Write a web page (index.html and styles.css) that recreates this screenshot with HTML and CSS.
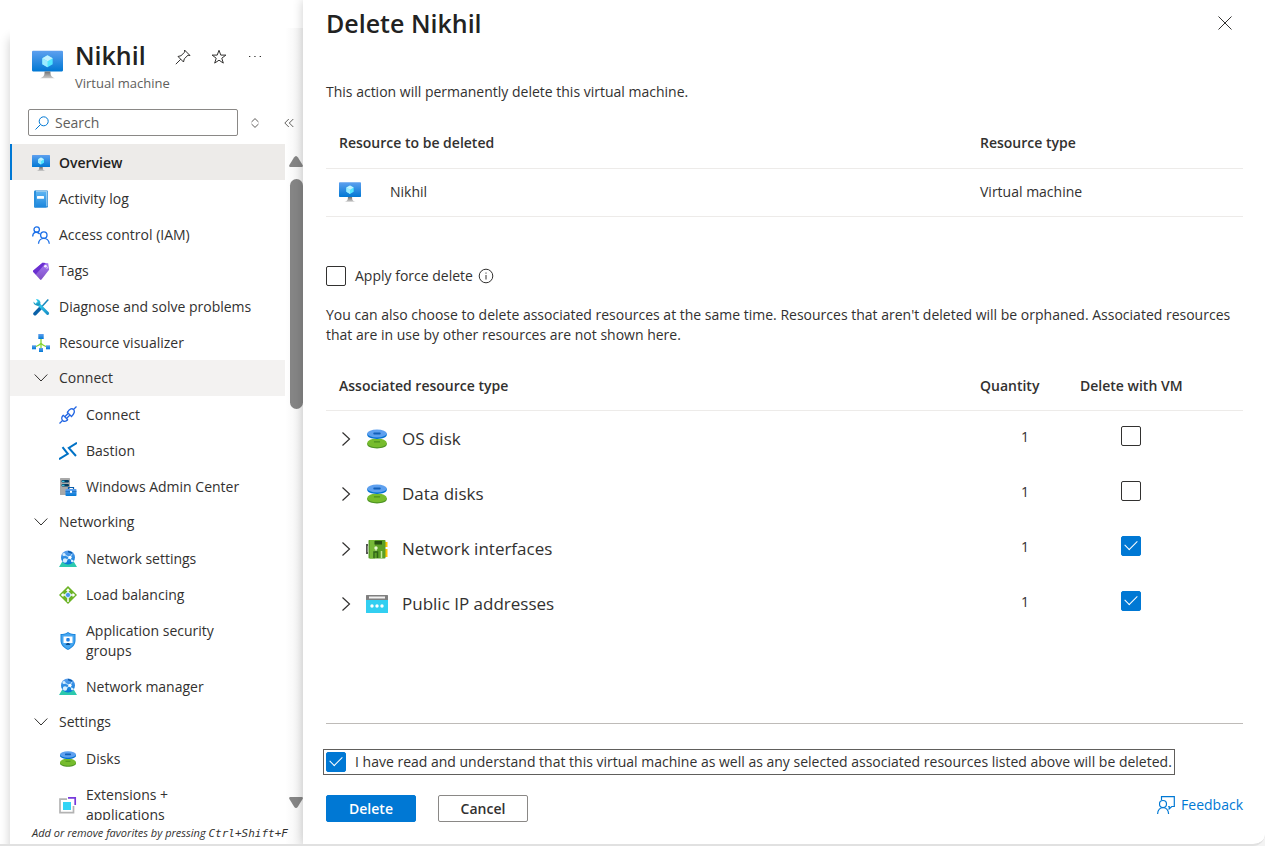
FILE: index.html
```html
<!doctype html>
<html lang="en">
  <head>
    <meta charset="UTF-8" />
    <meta name="viewport" content="width=device-width, initial-scale=1.0" />
    <title>Delete Nikhil</title>
    <link rel="stylesheet" href="styles.css">
  </head>
  <body>
    <!-- Shared icons -->
    <svg class="sprite" aria-hidden="true">
      <defs>
        <linearGradient id="vmScreen" x1="0" y1="0" x2="0" y2="1">
          <stop offset="0" stop-color="#5ea0ef" />
          <stop offset="1" stop-color="#0078d4" />
        </linearGradient>
        <linearGradient id="logFill" x1="0" y1="0" x2="0" y2="1">
          <stop offset="0" stop-color="#5cb4f2" />
          <stop offset="1" stop-color="#1a85dc" />
        </linearGradient>
        <linearGradient id="vmStand" x1="0" y1="0" x2="0" y2="1">
          <stop offset="0" stop-color="#707070" />
          <stop offset="1" stop-color="#cccccc" />
        </linearGradient>
        <linearGradient id="tagFill" x1="0" y1="0" x2="0" y2="1">
          <stop offset="0" stop-color="#a67af4" />
          <stop offset="1" stop-color="#7f4fc4" />
        </linearGradient>
        <linearGradient id="toolFill" x1="0" y1="0" x2="0" y2="1">
          <stop offset="0" stop-color="#32d4f5" />
          <stop offset="1" stop-color="#198ab3" />
        </linearGradient>
        <linearGradient id="wrenchFill" x1="1" y1="1" x2="0" y2="0">
          <stop offset="0" stop-color="#1b93c8" />
          <stop offset="1" stop-color="#32d4f5" />
        </linearGradient>
      </defs>
      <symbol id="vm" viewBox="0 0 18 18">
        <rect y="1" width="18" height="12" rx="0.6" fill="url(#vmScreen)" />
        <path d="M9 3.6l3 1.7v3.5l-3 1.8-3-1.8V5.300z" fill="#50e6ff" />
        <path d="M9 3.6l3 1.700-3 1.800-3-1.800z" fill="#c3f1ff" />
        <path d="M6 5.300l3 1.800v3.500L6 8.800z" fill="#9cebff" />
        <path d="M7.300 13h3.400c0 2.600.6 3.200 2.800 4H4.500c2.200-.8 2.800-1.400 2.800-4z" fill="url(#vmStand)" />
      </symbol>
      <symbol id="log" viewBox="0 0 18 18">
        <path d="M3.500.5H15a1 1 0 011 1v15a1 1 0 01-1 1H3.500z" fill="#2585d0" />
        <rect x="3.500" y="1.300" width="11.800" height="15" fill="#d9effc" />
        <rect x="2" y="1.800" width="12.500" height="15.700" rx="0.800" fill="url(#logFill)" />
        <path d="M2 1.600a1.100 1.100 0 011.100-1.100H4v17H3a1 1 0 01-1-1z" fill="#2a8fdc" />
        <rect x="5" y="6" width="7" height="2.800" rx="0.500" fill="#fff" />
      </symbol>
      <symbol id="iam" viewBox="0 0 18 18">
        <g fill="none" stroke="#1a6fe8" stroke-width="1.300">
          <circle cx="4.700" cy="3.500" r="2.700" />
          <path d="M.7 10.500c0-5 5-5.300 7-2.300" />
          <circle cx="11.800" cy="9" r="3.200" />
          <path d="M6.500 17.800c.3-7.300 10.300-7.300 10.800 0" />
        </g>
      </symbol>
      <symbol id="tag" viewBox="0 0 18 18">
        <path d="M10.500.8l5.700.5.9 6.400-7.600 9.800a1 1 0 01-1.500.1L1.300 10a1 1 0 010-1.400z" fill="url(#tagFill)" />
        <path d="M10.500.8l3.200.3L3.800 12.500 1.300 10a1 1 0 010-1.400z" fill="#6a2fd0" />
        <circle cx="13.500" cy="4.300" r="1.300" fill="#fff" />
        <path d="M13.500 4.300c2-.5 2.500 1 1.300 2.500" fill="none" stroke="#e3d3fb" />
      </symbol>
      <symbol id="tools" viewBox="0 0 18 18">
        <path d="M16.300 1.500L9.500 9" stroke="#1787bd" stroke-width="1.500" />
        <path d="M8.500 10L3 15.700" stroke="#0a61a8" stroke-width="3.500" stroke-linecap="round" />
        <path d="M5.600 5.400l10 10" stroke="url(#wrenchFill)" stroke-width="3" stroke-linecap="round" />
        <path d="M4 1a4 4 0 014.200 5.400 4 4 0 01-6.900-2.800l2.400 2.100L6 4.500z" fill="url(#toolFill)" />
      </symbol>
      <symbol id="visualizer" viewBox="0 0 18 18">
        <path d="M9 4v10M2 13c4-1 6-2 7-4 1 2 3 3 7 4" fill="none" stroke="#86d633" stroke-width="1.300" />
        <rect x="6.300" width="5.400" height="5" fill="url(#vmScreen)" />
        <rect y="11.300" width="4" height="4" fill="url(#vmScreen)" />
        <rect x="14" y="11.300" width="4" height="4" fill="url(#vmScreen)" />
        <rect x="7" y="14" width="4" height="4" fill="url(#vmScreen)" />
      </symbol>
      <symbol id="plug" viewBox="0 0 18 18">
        <g fill="none" stroke="#2266e3" stroke-width="1.300">
          <path d="M.5 17.500l3-3M17.500.5l-3 3M4 9l5 5M8 6l5 5" />
          <path d="M4.300 9.300c-2 2-2 3.700-.6 5.100 1.400 1.300 3.200 1.300 5-.6M8.300 6.300c2.700-3.700 4.800-4.200 6.200-2.900 1.400 1.500.9 4.200-2 7M5.800 10.800l3.500-3.500M7.500 12.500L11 9" />
        </g>
      </symbol>
      <symbol id="bastion" viewBox="0 0 18 18">
        <g fill="none" stroke="#0072c6" stroke-width="2">
          <path d="M0 17.200l8.800-5.400L3.500 5.200M18 .8L9.800 6l7.200 8" />
        </g>
      </symbol>
      <symbol id="admin" viewBox="0 0 18 18">
        <rect x="1" width="10" height="17" rx="0.600" fill="#a9a9a9" />
        <rect x="2.500" y="2" width="7.500" height="2.600" rx="1" fill="#003c61" />
        <rect x="2.500" y="6" width="7.500" height="2.600" rx="1" fill="#003c61" />
        <path d="M3 3.300h2.500M3 7.300h2.500" stroke="#50e6ff" />
        <path d="M9.500 11V9.500h5V11" fill="none" stroke="#0b5ca8" stroke-width="1.200" />
        <rect x="6.500" y="11" width="11" height="7" rx="0.800" fill="url(#vmScreen)" />
        <path d="M6.500 13.500h11" stroke="#0b5ca8" stroke-width="0.500" />
        <rect x="11" y="12.800" width="2" height="2" fill="#fff" />
      </symbol>
      <symbol id="globe" viewBox="0 0 18 18">
        <path d="M3 12h12l3 5H0z" fill="#2cc9ae" />
        <circle cx="9" cy="7.500" r="7" fill="url(#vmScreen)" />
        <path d="M5 4.500l6 3 2 4M11 7.500l-5 3.500M11 7.500l2-3.500" stroke="#b9e3ff" fill="none" />
        <circle cx="5" cy="4.500" r="1.500" fill="#d6efff" />
        <circle cx="6" cy="10.500" r="2.200" fill="#d6efff" />
        <circle cx="11" cy="7.300" r="1.600" fill="#fff" />
        <circle cx="13.300" cy="11" r="1.300" fill="#d6efff" />
        <path d="M9 1.500l4 1.500" stroke="#0b5ca8" stroke-width="1.500" />
      </symbol>
      <symbol id="balancer" viewBox="0 0 18 18">
        <path d="M9 0l9 9-9 9-9-9z" fill="#6bb324" />
        <path d="M9 2.200l2.300 2.600H6.700zM1.800 9l2.600-2.300v4.600zM16.200 9l-2.600-2.300v4.600z" fill="#fff" />
        <path d="M9 4v3M4 9h3M14 9h-3M9 11v5" stroke="#fff" stroke-width="1.500" />
        <circle cx="9" cy="9" r="2.600" fill="#4b95ed" stroke="#d7efff" />
      </symbol>
      <symbol id="shield" viewBox="0 0 18 18">
        <path d="M9 0c3 2 5 2 7.500 2v6.500c0 4.500-3.500 7.500-7.500 9.500-4-2-7.500-5-7.500-9.500V2C4 2 6 2 9 0z" fill="#1984dc" />
        <path d="M9 1c2.500 1.600 4.300 1.800 6.500 1.900v5.600c0 4-3 6.600-6.500 8.400-3.500-1.800-6.500-4.400-6.500-8.400V2.900C4.700 2.800 6.500 2.600 9 1z" fill="#46a6f0" />
        <rect x="4.500" y="4.500" width="9" height="6.500" fill="#fff" />
        <rect x="7.300" y="6" width="3.400" height="3.400" rx="1" fill="#2180e3" />
        <path d="M8 11h2l1.500 2h-5z" fill="#0b4d8e" />
      </symbol>
      <symbol id="disks" viewBox="0 0 18 18">
        <path d="M1 12.300v1.200c0 1.800 3.600 3.200 8 3.200s8-1.400 8-3.200v-1.200z" fill="#4e9423" />
        <ellipse cx="9" cy="12.200" rx="8" ry="3.600" fill="#76bc2d" />
        <path d="M6.500 11.300h5" stroke="#549b20" stroke-width="1.300" />
        <path d="M1 4.500v1.300C1 7.600 4.600 9 9 9s8-1.400 8-3.200V4.500z" fill="#0070d1" />
        <ellipse cx="9" cy="4.500" rx="8" ry="3.300" fill="#5ea0ef" />
        <rect x="6" y="3.600" width="6" height="1.700" rx="0.600" fill="#135fb8" />
      </symbol>
      <symbol id="extensions" viewBox="0 0 18 18">
        <path d="M8 3.200H1v13.500h13.500V10" fill="none" stroke="#b3b3b3" stroke-width="1.700" />
        <rect x="4" y="6" width="8" height="8" fill="#32d4f5" />
        <path d="M9 1.800h7.200V9" fill="none" stroke="#773adc" stroke-width="1.700" />
      </symbol>
      <symbol id="nic" viewBox="0 0 22 20">
        <path d="M2 6H.8v8H2" fill="none" stroke="#555" stroke-width="1.800" />
        <rect x="19" y="3" width="2.500" height="5" fill="#ffc400" />
        <rect x="19" y="10" width="2.500" height="8" fill="#ffc400" />
        <rect x="2.500" y="1" width="17" height="18.500" rx="0.800" fill="#5b9f26" />
        <rect x="4" y="1" width="5" height="18.500" fill="#76b837" />
        <rect x="8.500" y="2" width="7.500" height="3.500" fill="#254f12" />
        <path d="M8 19v-6h3.500v6" fill="none" stroke="#2f6417" stroke-width="1.500" />
        <path d="M15.500 19v-7" stroke="#c5eb96" stroke-width="1.500" />
        <path d="M10 9v3" stroke="#d9f4ba" />
        <circle cx="10" cy="9" r="1.700" fill="#e6f8d0" />
      </symbol>
      <symbol id="ip" viewBox="0 0 22 18">
        <rect y="4" width="22" height="14" rx="0.600" fill="#32cff1" />
        <path d="M.6 0h20.800a.6.6 0 01.6.6V5H0V.6A.6.600 0 01.6 0z" fill="#808080" />
        <rect x="3" y="1.500" width="16" height="2" fill="#f2f2f2" />
        <circle cx="6" cy="11" r="1.700" fill="#fff" />
        <circle cx="11" cy="11" r="1.700" fill="#fff" />
        <circle cx="16" cy="11" r="1.700" fill="#fff" />
      </symbol>
      <symbol id="down" viewBox="0 0 14 14">
        <path d="M.7 3.500L7 10l6.300-6.500" fill="none" stroke="#323130" />
      </symbol>
      <symbol id="right" viewBox="0 0 14 14">
        <path d="M3.500.5L10.500 7l-7 6.500" fill="none" stroke="#323130" stroke-width="1.200" />
      </symbol>
    </svg>

    <div class="portal">
      <aside class="sidebar">
        <header class="resource">
          <svg class="resource-icon"><use href="#vm" /></svg>
          <div class="resource-name">
            <h2>Nikhil</h2>
            <p>Virtual machine</p>
          </div>
          <div class="resource-actions">
            <button aria-label="Pin">
              <svg viewBox="0 0 16 16"><path d="M.8 15.200l5-5M3 7.500l5.500 5.500.8-3.200L13 6.200l2 .3L9.500 1l.3 2L6 6.700z" /></svg>
            </button>
            <button aria-label="Favorite">
              <svg viewBox="0 0 16 16"><path d="M8 1.300l1.800 4.800h5.100l-4.100 3.100 1.500 4.900L8 11.200l-4.300 2.900 1.500-4.900-4.100-3.100h5.100z" /></svg>
            </button>
            <button aria-label="More">
              <svg class="dots" viewBox="0 0 16 16"><path d="M2 7.500h1.300M7.300 7.500h1.300M12.700 7.500H14" /></svg>
            </button>
          </div>
        </header>

        <div class="search-row">
          <label class="search">
            <svg viewBox="0 0 14 14"><circle cx="8.700" cy="5.300" r="4.500" /><path d="M5.500 8.500L.5 13.500" /></svg>
            <input type="text" placeholder="Search" aria-label="Search" />
          </label>
          <button aria-label="Expand all">
            <svg viewBox="0 0 10 10"><path d="M1.500 4L5 .6 8.500 4M1.500 6L5 9.400 8.500 6" /></svg>
          </button>
          <button aria-label="Collapse menu">
            <svg viewBox="0 0 10 10"><path d="M4.800 1L.8 5l4 4M9.300 1l-4 4 4 4" /></svg>
          </button>
        </div>

        <div class="menu-wrap">
          <nav class="menu">
            <a class="item selected" href="#"><svg><use href="#vm" /></svg><span>Overview</span></a>
            <a class="item" href="#"><svg><use href="#log" /></svg><span>Activity log</span></a>
            <a class="item" href="#"><svg><use href="#iam" /></svg><span>Access control (IAM)</span></a>
            <a class="item" href="#"><svg><use href="#tag" /></svg><span>Tags</span></a>
            <a class="item" href="#"><svg><use href="#tools" /></svg><span>Diagnose and solve problems</span></a>
            <a class="item" href="#"><svg><use href="#visualizer" /></svg><span>Resource visualizer</span></a>
            <button class="item group hovered"><svg><use href="#down" /></svg><span>Connect</span></button>
            <a class="item sub" href="#"><svg><use href="#plug" /></svg><span>Connect</span></a>
            <a class="item sub" href="#"><svg><use href="#bastion" /></svg><span>Bastion</span></a>
            <a class="item sub" href="#"><svg><use href="#admin" /></svg><span>Windows Admin Center</span></a>
            <button class="item group"><svg><use href="#down" /></svg><span>Networking</span></button>
            <a class="item sub" href="#"><svg><use href="#globe" /></svg><span>Network settings</span></a>
            <a class="item sub" href="#"><svg><use href="#balancer" /></svg><span>Load balancing</span></a>
            <a class="item sub" href="#"><svg><use href="#shield" /></svg><span>Application security groups</span></a>
            <a class="item sub" href="#"><svg><use href="#globe" /></svg><span>Network manager</span></a>
            <button class="item group"><svg><use href="#down" /></svg><span>Settings</span></button>
            <a class="item sub" href="#"><svg><use href="#disks" /></svg><span>Disks</span></a>
            <a class="item sub" href="#"><svg><use href="#extensions" /></svg><span>Extensions +<br />applications</span></a>
          </nav>
          <div class="scrollbar" aria-hidden="true">
            <svg viewBox="0 0 14 11"><path d="M7 0q1 0 2 1.500l4.600 7.500q.9 2-1 2H1.400q-1.900 0-1-2L5 1.500Q6 0 7 0z" /></svg>
            <div class="track"><div class="thumb"></div></div>
            <svg viewBox="0 0 14 11"><path d="M7 11q1 0 2-1.500L13.600 2q.9-2-1-2H1.400q-1.900 0-1 2L5 9.500Q6 11 7 11z" /></svg>
          </div>
        </div>

        <p class="hint">Add or remove favorites by pressing <kbd>Ctrl+Shift+F</kbd></p>
      </aside>

      <main class="panel">
        <header class="panel-header">
          <h1>Delete Nikhil</h1>
          <button class="close" aria-label="Close">
            <svg viewBox="0 0 14 14"><path d="M.5.5l13 13M13.500.5l-13 13" /></svg>
          </button>
        </header>

        <div class="content">
          <p class="intro">This action will permanently delete this virtual machine.</p>

          <table class="resources">
            <colgroup>
              <col class="col-icon" />
              <col />
              <col class="col-type" />
            </colgroup>
            <thead>
              <tr>
                <th colspan="2">Resource to be deleted</th>
                <th>Resource type</th>
              </tr>
            </thead>
            <tbody>
              <tr>
                <td><svg><use href="#vm" /></svg></td>
                <td class="name">Nikhil</td>
                <td>Virtual machine</td>
              </tr>
            </tbody>
          </table>

          <div class="force">
            <input type="checkbox" id="force" />
            <label for="force">Apply force delete</label>
            <svg viewBox="0 0 16 16"><circle cx="8" cy="8" r="6.800" /><path d="M8 7v4.500M8 4.500v1.200" /></svg>
          </div>

          <p>
            You can also choose to delete associated resources at the same time. Resources that
            aren't deleted will be orphaned. Associated resources that are in use by other
            resources are not shown here.
          </p>

          <table class="associated">
            <colgroup>
              <col />
              <col class="col-qty" />
              <col class="col-vm" />
            </colgroup>
            <thead>
              <tr>
                <th>Associated resource type</th>
                <th>Quantity</th>
                <th>Delete with VM</th>
              </tr>
            </thead>
            <tbody>
              <tr>
                <td>
                  <div class="kind">
                    <button aria-label="Expand OS disk"><svg><use href="#right" /></svg></button>
                    <svg><use href="#disks" /></svg><span>OS disk</span>
                  </div>
                </td>
                <td class="qty">1</td>
                <td class="with-vm"><input type="checkbox" aria-label="Delete OS disk with VM" /></td>
              </tr>
              <tr>
                <td>
                  <div class="kind">
                    <button aria-label="Expand Data disks"><svg><use href="#right" /></svg></button>
                    <svg><use href="#disks" /></svg><span>Data disks</span>
                  </div>
                </td>
                <td class="qty">1</td>
                <td class="with-vm"><input type="checkbox" aria-label="Delete data disks with VM" /></td>
              </tr>
              <tr>
                <td>
                  <div class="kind">
                    <button aria-label="Expand Network interfaces"><svg><use href="#right" /></svg></button>
                    <svg><use href="#nic" /></svg><span>Network interfaces</span>
                  </div>
                </td>
                <td class="qty">1</td>
                <td class="with-vm"><input type="checkbox" aria-label="Delete network interfaces with VM" checked /></td>
              </tr>
              <tr>
                <td>
                  <div class="kind">
                    <button aria-label="Expand Public IP addresses"><svg><use href="#right" /></svg></button>
                    <svg><use href="#ip" /></svg><span>Public IP addresses</span>
                  </div>
                </td>
                <td class="qty">1</td>
                <td class="with-vm"><input type="checkbox" aria-label="Delete public IP addresses with VM" checked /></td>
              </tr>
            </tbody>
          </table>
        </div>

        <footer class="panel-footer">
          <div class="confirm">
            <input type="checkbox" id="confirm" checked />
            <label for="confirm">I have read and understand that this virtual machine as well as any selected associated resources listed above will be deleted.</label>
          </div>
          <div class="actions">
            <button class="btn primary">Delete</button>
            <button class="btn">Cancel</button>
            <a class="feedback" href="#">
              <svg viewBox="0 0 18 18"><path d="M4.500 4V.7h12.800v9.800h-2.500l-2.600 2.300V10.500h-1" /><circle cx="6" cy="8" r="3.500" /><path d="M.6 18c.3-8.500 10.600-8.500 11 0" /></svg>
              Feedback
            </a>
          </div>
        </footer>
      </main>
    </div>
  </body>
</html>
```

FILE: styles.css
```css
* {
  box-sizing: border-box;
}
body {
  margin: 0;
  font-family: 'Open Sans', 'Segoe UI', 'Noto Sans', sans-serif;
  font-size: 14px;
  line-height: 20px;
  color: #323130;
  background: #f3f3f3;
}
h1,
h2,
p {
  margin: 0;
}
button {
  font: inherit;
  color: inherit;
  background: none;
  border: none;
  padding: 0;
  cursor: pointer;
}
a {
  color: inherit;
  text-decoration: none;
}
svg {
  display: block;
  flex-shrink: 0;
}
.sprite {
  position: absolute;
  width: 0;
  height: 0;
}
.portal {
  display: flex;
  height: 100vh;
  padding-left: 10px;
  background: #fff;
  border-bottom: 2px solid #e1e1e1;
  border-bottom-right-radius: 12px;
  overflow: hidden;
}

/* Sidebar */
.sidebar {
  width: 293px;
  flex-shrink: 0;
  display: flex;
  flex-direction: column;
  margin-top: 28px;
  padding-top: 9px;
  box-shadow: 0 10px 10px rgba(0, 0, 0, 0.2);
  clip-path: inset(0 0 0 -10px);
  background: linear-gradient(to right, #fff 275px, #f3f3f3);
}
.resource {
  display: flex;
  padding-left: 22px;
}
.resource-icon {
  width: 31px;
  height: 31px;
  margin-top: 12px;
}
.resource-name {
  width: 93px;
  margin-left: 12px;
}
.resource-name h2 {
  font-size: 25px;
  line-height: 36px;
  font-weight: 600;
  color: #222;
}
.resource-name p {
  font-size: 13px;
  color: #605e5c;
  white-space: nowrap;
}
.resource-actions {
  display: flex;
  align-items: flex-start;
  gap: 20px;
  margin: 12px 0 0 7px;
}
.resource-actions svg {
  width: 16px;
  height: 16px;
  fill: none;
  stroke: #323130;
}
.search-row {
  display: flex;
  align-items: center;
  margin: 16px 0 8px 18px;
}
.search {
  display: flex;
  align-items: center;
  gap: 6px;
  width: 210px;
  height: 27px;
  padding: 0 6px;
  background: #fff;
  border: 1px solid #8a8886;
  border-radius: 2px;
}
.search svg {
  width: 14px;
  height: 14px;
  fill: none;
  stroke: #0078d4;
}
.search input {
  width: 100%;
  border: none;
  outline: none;
  padding: 0;
  font: inherit;
  background: none;
}
.search input::placeholder {
  color: #605e5c;
}
.search-row button {
  margin-left: 12px;
}
.search-row button + button {
  margin-left: 24px;
}
.search-row button svg {
  width: 10px;
  height: 10px;
  fill: none;
  stroke: #605e5c;
}
.menu-wrap {
  flex: 1;
  min-height: 0;
  display: flex;
}
.menu {
  width: 275px;
  overflow: hidden;
}
.item {
  display: flex;
  align-items: center;
  gap: 9px;
  width: 100%;
  min-height: 36px;
  padding: 9px 20px 7px 22px;
  text-align: left;
}
.item svg {
  width: 18px;
  height: 18px;
}
.item.sub {
  padding-left: 49px;
  padding-right: 32px;
}
.group {
  padding-top: 8px;
  padding-bottom: 8px;
}
.group svg {
  width: 14px;
  height: 14px;
  margin: 0 2px;
}
.selected {
  background: #edebe9;
  border-left: 2px solid #0078d4;
  padding-left: 20px;
  font-weight: 600;
  color: #222;
}
.hovered {
  background: #f3f2f1;
}
.scrollbar {
  width: 18px;
  display: flex;
  flex-direction: column;
  align-items: flex-end;
  gap: 12px;
  padding: 12px 0;
}
.scrollbar svg {
  width: 14px;
  height: 11px;
  fill: #858585;
}
.track {
  flex: 1;
  width: 13px;
}
.thumb {
  height: 38%;
  border-radius: 7px;
  background: #858585;
}
.hint {
  padding: 4px 0 0 22px;
  height: 24px;
  font-size: 11px;
  line-height: 18px;
  font-style: italic;
  white-space: nowrap;
}
.hint kbd {
  font-family: 'DejaVu Sans Mono', monospace;
  font-size: 11px;
}

/* Delete panel */
.panel {
  flex: 1;
  min-width: 0;
  display: flex;
  flex-direction: column;
  padding: 7px 22px 22px 23px;
  background: #fff;
  box-shadow: 0 0 10px rgba(0, 0, 0, 0.2);
  z-index: 1;
}
.panel-header {
  display: flex;
  justify-content: space-between;
  align-items: center;
}
h1 {
  font-size: 25px;
  line-height: 32px;
  font-weight: 600;
  color: #222;
}
.close {
  margin-right: 11px;
}
.close svg {
  width: 14px;
  height: 14px;
  stroke: #323130;
}
.content {
  flex: 1;
}
.intro {
  margin: 43px 0 16px;
}
table {
  width: 100%;
  table-layout: fixed;
  border-collapse: collapse;
}
th,
td {
  padding: 0 13px;
  text-align: left;
}
th {
  height: 50px;
  font-weight: 600;
  border-bottom: 1px solid #edebe9;
}
.col-icon {
  width: 64px;
}
.col-type {
  width: 276px;
}
.col-qty {
  width: 100px;
}
.col-vm {
  width: 176px;
}
.resources td {
  height: 48px;
  border-bottom: 1px solid #edebe9;
}
.resources .name {
  padding-left: 0;
}
.resources svg {
  width: 22px;
  height: 22px;
}
input[type='checkbox'] {
  appearance: none;
  flex-shrink: 0;
  width: 20px;
  height: 20px;
  margin: 0;
  border: 1px solid #323130;
  border-radius: 2px;
  background: #fff;
  display: grid;
  place-items: center;
}
input[type='checkbox']:checked {
  background: #0078d4;
  border-color: #0078d4;
}
input[type='checkbox']:checked::before {
  content: '';
  width: 11px;
  height: 6px;
  margin-top: -5px;
  border: solid #fff;
  border-width: 0 0 1px 1px;
  transform: rotate(-45deg);
}
.force {
  display: flex;
  align-items: center;
  margin: 49px 0 19px;
}
.force label,
.confirm label {
  margin-left: 9px;
}
.force svg {
  width: 16px;
  height: 16px;
  margin-left: 5px;
  fill: none;
  stroke: #323130;
}
.associated {
  margin-top: 16px;
}
.associated th,
.kind {
  padding-top: 2px;
}
.associated td {
  height: 55px;
}
.associated .qty {
  padding: 0 38px 2px 0;
  text-align: right;
}
.associated .with-vm {
  padding: 0 0 4px 54px;
}
.kind {
  display: flex;
  align-items: center;
  font-size: 17px;
}
.kind > svg {
  width: 22px;
  height: 22px;
  margin: 0 14px 0 13px;
}
.kind button svg {
  width: 14px;
  height: 14px;
}
.panel-footer {
  padding-top: 25px;
  border-top: 1px solid #bebbb8;
}
.confirm {
  display: flex;
  align-items: center;
  width: fit-content;
  margin-left: -3px;
  padding: 2px;
  border: 1px solid #605e5c;
}
.actions {
  display: flex;
  align-items: flex-start;
  gap: 22px;
  margin-top: 20px;
}
.btn {
  width: 90px;
  height: 27px;
  border: 1px solid #8a8886;
  border-radius: 2px;
  font-weight: 600;
}
.btn.primary {
  background: #0078d4;
  border-color: #0078d4;
  color: #fff;
}
.feedback {
  display: flex;
  align-items: center;
  gap: 6px;
  margin-left: auto;
  color: #0078d4;
}
.feedback svg {
  width: 18px;
  height: 18px;
  fill: none;
  stroke: #0078d4;
  stroke-width: 1.2;
}
```
